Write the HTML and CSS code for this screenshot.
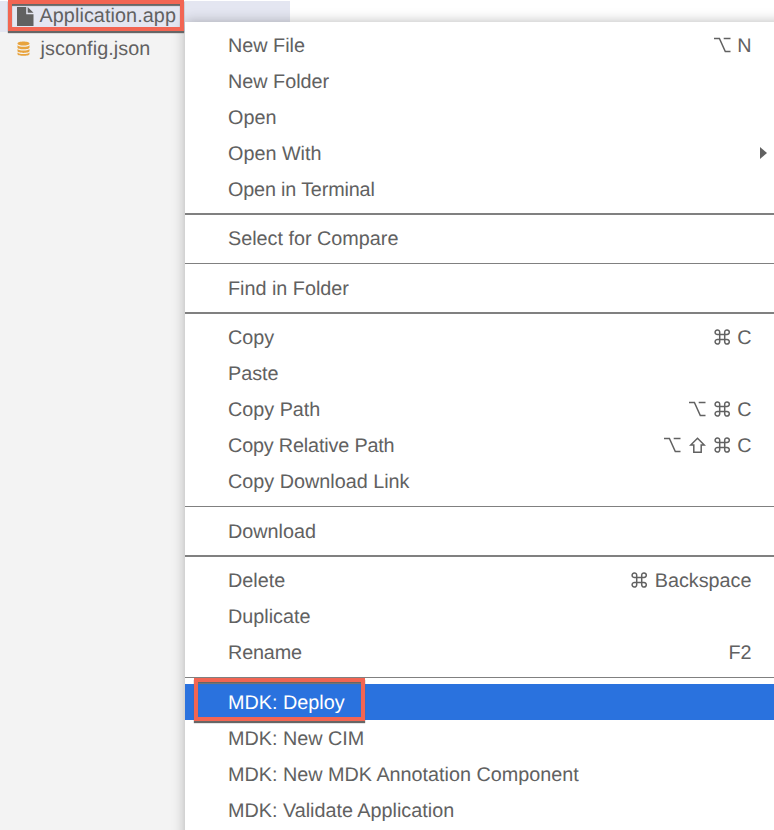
FILE: index.html
```html
<!DOCTYPE html>
<html lang="en">
<head>
<meta charset="utf-8">
<title>File explorer</title>
<link rel="stylesheet" href="styles.css">
</head>
<body>
<svg class="symbols" aria-hidden="true">
  <symbol id="option" viewBox="0 0 17 16"><path d="M0 1.500h5.400l5.900 13H16.500M9.700 1.500h6.800"/></symbol>
  <symbol id="command" viewBox="0 0 17 16"><path d="M5.700 5.500h5v5h-5zM5.700 5.500H3.600a2.300 2.300 0 1 1 2.100-2.300zM10.700 5.500V3.200a2.300 2.300 0 1 1 2.200 2.300zM10.700 10.500h2.200a2.300 2.300 0 1 1-2.200 2.300zM5.700 10.500v2.300a2.300 2.300 0 1 1-2.100-2.300z"/></symbol>
  <symbol id="shift" viewBox="0 0 17 16"><path d="M8.500 1.200L15.300 8h-3.100v7.200H4.800V8H1.700z"/></symbol>
</svg>
<aside class="explorer">
  <div class="file selected">
    <svg class="doc" viewBox="0 0 17 20" preserveAspectRatio="none"><path d="M0 0h9.500v7.500H17V20H0zM11 0l6 6h-6z"/></svg>
    <span>Application.app</span>
  </div>
  <div class="file">
    <svg class="json" viewBox="0 0 13 15"><path d="M.5 2.500C.5-.2 12.500-.2 12.500 2.500S.5 5.200.5 2.500zM.5 4.200c2 2 10 2 12 0v2.200c0 2.500-12 2.500-12 0zM.5 7.900c2 2 10 2 12 0v2.200c0 2.500-12 2.500-12 0zM.5 11.500c2 2 10 2 12 0v1.400c0 2.500-12 2.500-12 0z"/></svg>
    <span>jsconfig.json</span>
  </div>
</aside>
<div class="callout callout-file"></div>
<nav class="menu">
  <div class="item"><span>New File</span><span class="keys"><svg><use href="#option"/></svg><span>N</span></span></div>
  <div class="item"><span>New Folder</span></div>
  <div class="item"><span>Open</span></div>
  <div class="item"><span>Open With</span><i class="arrow"></i></div>
  <div class="item"><span class="tight">Open in Terminal</span></div>
  <div class="separator"></div>
  <div class="item"><span>Select for Compare</span></div>
  <div class="separator"></div>
  <div class="item"><span>Find in Folder</span></div>
  <div class="separator"></div>
  <div class="item"><span>Copy</span><span class="keys"><svg><use href="#command"/></svg><span>C</span></span></div>
  <div class="item"><span>Paste</span></div>
  <div class="item"><span>Copy Path</span><span class="keys"><svg><use href="#option"/></svg><svg><use href="#command"/></svg><span>C</span></span></div>
  <div class="item"><span class="tight">Copy Relative Path</span><span class="keys"><svg><use href="#option"/></svg><svg><use href="#shift"/></svg><svg><use href="#command"/></svg><span>C</span></span></div>
  <div class="item"><span>Copy Download Link</span></div>
  <div class="separator"></div>
  <div class="item"><span>Download</span></div>
  <div class="separator"></div>
  <div class="item"><span>Delete</span><span class="keys"><svg><use href="#command"/></svg><span>Backspace</span></span></div>
  <div class="item"><span>Duplicate</span></div>
  <div class="item"><span class="tight">Rename</span><span class="keys"><span>F2</span></span></div>
  <div class="separator"></div>
  <div class="item active"><span>MDK: Deploy</span></div>
  <div class="item"><span>MDK: New CIM</span></div>
  <div class="item"><span>MDK: New MDK Annotation Component</span></div>
  <div class="item"><span>MDK: Validate Application</span></div>
</nav>
<div class="callout callout-deploy"></div>
</body>
</html>
```
FILE: styles.css
```css
* { box-sizing: border-box; }
body {
  position: relative;
  width: 774px;
  height: 830px;
  margin: 0;
  overflow: hidden;
  background: #fff;
  color: #616161;
  font: 19.800px/36px "Liberation Sans", Arial, sans-serif;
  text-rendering: geometricPrecision;
  white-space: nowrap;
}
.symbols { position: absolute; width: 0; height: 0; }
.explorer {
  width: 290px;
  height: 830px;
  padding-top: 1px;
  background: linear-gradient(#fff, #fff) 0 0 / 100% 1px no-repeat, #f3f3f3;
}
.file {
  display: flex;
  align-items: center;
  height: 32px;
  padding-left: 17px;
}
.file span { letter-spacing: 0.080px; }
.file.selected { height: 31px; padding-bottom: 1px; background: #e4e6f1; }
.file.selected span { margin-left: 6px; padding-bottom: 1px; }
.file:not(.selected) span { margin-left: 10.500px; padding-top: 2px; }
.doc { width: 16.500px; height: 19px; fill: #616161; }
.json { width: 13px; height: 15px; fill: #e8a33d; }
.menu {
  position: absolute;
  top: 22px;
  left: 185px;
  width: 610px;
  height: 830px;
  padding-top: 4.800px;
  background: #fff;
  box-shadow: 0 0 12px rgba(0, 0, 0, 0.28);
}
.item {
  display: flex;
  align-items: center;
  justify-content: space-between;
  height: 36px;
  padding: 0 43.500px 0 43px;
}
.item > span:first-child, .keys > span { padding-top: 2px; }
.item .tight { letter-spacing: -0.160px; }
.item.active { background: #2a72de; color: #fff; }
.separator {
  height: 13.500px;
  padding-top: 6.500px;
}
.separator::before {
  content: "";
  display: block;
  height: 1.500px;
  background: #808080;
}
.keys { display: flex; align-items: center; gap: 8px; }
.keys svg {
  width: 17px;
  height: 16px;
  fill: none;
  stroke: #616161;
  stroke-width: 1.500;
}
.keys svg + span { margin-left: -1.700px; }
.arrow {
  margin-right: -15px;
  border-left: 7px solid #616161;
  border-top: 6px solid transparent;
  border-bottom: 6px solid transparent;
}
.callout {
  position: absolute;
  z-index: 2;
  border: 4px solid #f26553;
  box-shadow: 0 2px 1px #666, inset 0 2px 1px #666;
}
.callout-file { left: 8px; top: 0; width: 176px; height: 31px; }
.callout-deploy { left: 194px; top: 678px; width: 171px; height: 43px; }
```
